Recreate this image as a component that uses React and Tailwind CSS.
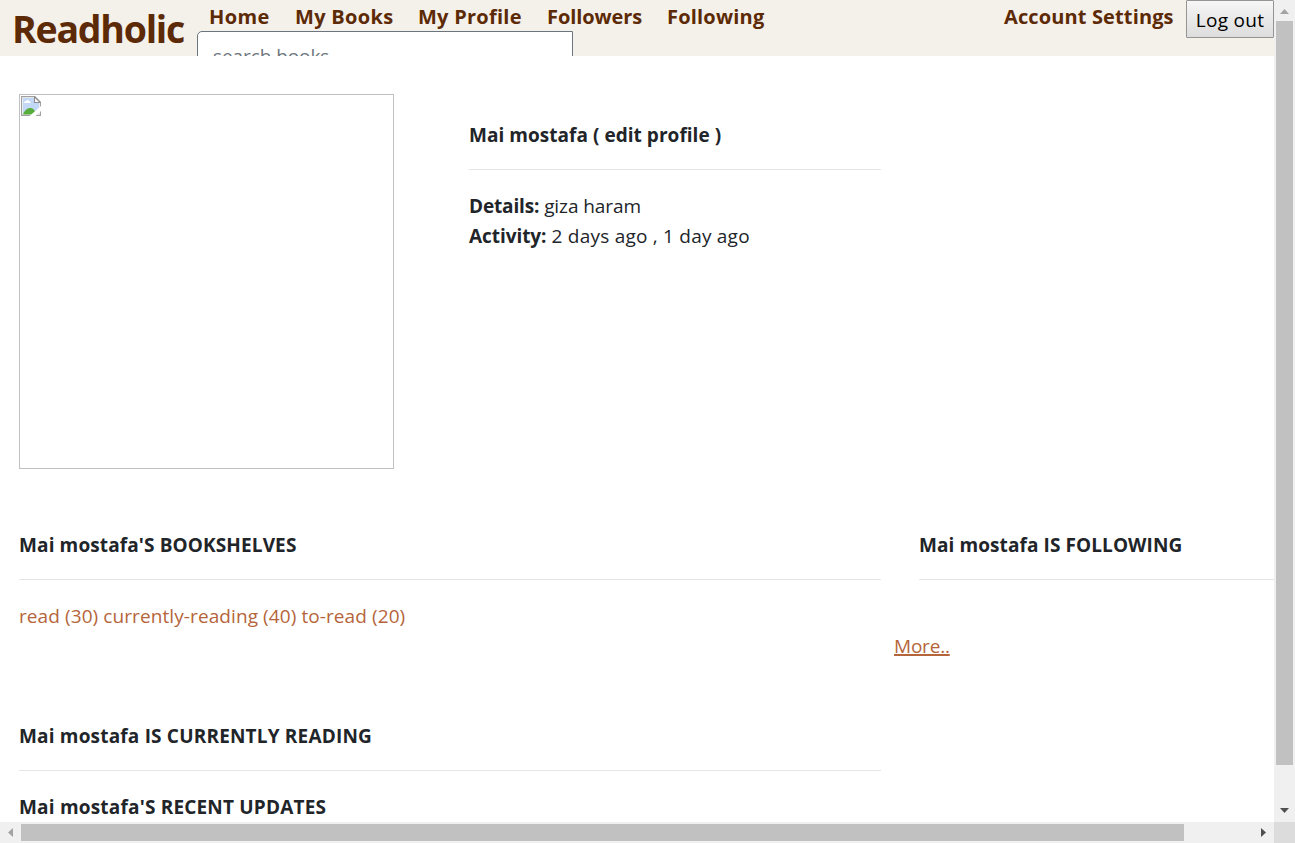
function Heading({ children, className = "" }) {
  return (
    <h2 className={`h-[30px] whitespace-nowrap text-[19px] leading-[30px] font-bold ${className}`}>
      {children}
    </h2>
  );
}

function Rule({ className = "" }) {
  return <hr className={`h-px border-0 bg-[#e5e5e5] ${className}`} />;
}

function BrokenImage() {
  return (
    <svg width="20" height="20" viewBox="0 0 20 20">
      <path d="M.6.6h13.2l5.6 5.6v13.2H.6Z" fill="#fff" stroke="#a0a0a0" strokeWidth="1.2" />
      <path d="M2 2h11v5h5v11H2Z" fill="#c3d7f6" />
      <path d="M3 7c0-1.5 1.7-1.5 2-2.2 1-1.5 3-1 3.300.5 1.300 0 1.500.8 1.500 1.700Z" fill="#fff" />
      <path d="M2 18.500c1-3.500 4-6.500 7-6.500s5 2 6 6.500Z" fill="#57ad3b" />
      <path d="M13.500.8v5.700h5.800Z" fill="#fff" stroke="#8d8d8d" strokeWidth="1.100" />
      <path d="M8.500 20 20 10v5l-5.500 5Z" fill="#fff" />
    </svg>
  );
}

function Arrow({ d, color }) {
  return (
    <svg width="21" height="21" viewBox="0 0 21 21" className="shrink-0">
      <path d={d} fill={color} />
    </svg>
  );
}

export default function App() {
  return (
    <div className="grid h-[843px] w-[1295px] grid-cols-[1274px_21px] grid-rows-[822px_21px] overflow-hidden bg-white font-['Open_Sans','Noto_Sans',sans-serif] text-[19px] text-[#212529]">
      <div className="overflow-hidden">
        <header className="flex h-14 overflow-hidden bg-[#f4f1ea] text-[#5c2a06]">
          <div className="w-[197px] shrink-0 pl-[12px] text-[37.5px] leading-[58px] font-bold tracking-[-1.25px]">
            Readholic
          </div>
          <div className="w-[807px] shrink-0">
            <nav className="flex h-[31px] text-[20px] leading-[33px] font-bold whitespace-nowrap">
              <a className="ml-3 w-[86px] tracking-[0.4px]">Home</a>
              <a className="w-[123px] tracking-[0.3px]">My Books</a>
              <a className="w-[129px] tracking-[0.25px]">My Profile</a>
              <a className="w-[120px] tracking-[-0.1px]">Followers</a>
              <a className="tracking-[0.2px]">Following</a>
            </nav>
            <div className="h-[48px] w-[376px] rounded-l-[5px] border border-[#6c757d] bg-white pl-[15px] leading-[48px] tracking-[-0.08px] text-[#6c757d]">
              search books
            </div>
          </div>
          <a className="w-[182px] shrink-0 text-[20px] leading-[33px] font-bold tracking-[0.13px] whitespace-nowrap">
            Account Settings
          </a>
          <button className="h-[38px] w-[88px] shrink-0 rounded-[1px] border border-[#949494] bg-linear-to-b from-[#f6f6f6] to-[#dddddd] pt-px text-[19px] leading-[36px] tracking-[0.3px] whitespace-nowrap text-black">
            Log out
          </button>
        </header>
        <main className="flex flex-col">
          <section className="flex h-[474px] pt-[38px] pl-[19px]">
            <div className="h-[375px] w-[375px] border border-[#c0c0c0] p-px">
              <BrokenImage />
            </div>
            <div className="ml-[75px] w-[412px] pt-[26px]">
              <Heading className="tracking-[0.04px]">Mai mostafa ( edit profile )</Heading>
              <Rule className="mt-[19px] mb-[21px]" />
              <p className="leading-[30px] tracking-[-0.08px]">
                <b className="tracking-[-0.15px]">Details:</b> giza haram
              </p>
              <p className="leading-[30px] tracking-[0.22px]">
                <b className="tracking-[-0.06px]">Activity:</b> 2 days ago , 1 day ago
              </p>
            </div>
          </section>
          <section className="flex pl-[19px]">
            <div className="w-[862px]">
              <Heading className="tracking-[0.12px]">Mai mostafa'S BOOKSHELVES</Heading>
              <Rule className="mt-[19px] mb-[21px]" />
              <p className="leading-[30px] tracking-[0.09px] text-[#b5653b]">
                <a>read (30)</a> <a>currently-reading (40)</a> <a>to-read (20)</a>
              </p>
              <Heading className="mt-[90px] tracking-[0.18px]">Mai mostafa IS CURRENTLY READING</Heading>
              <Rule className="mt-[19px] mb-[21px]" />
              <Heading className="tracking-[0.19px]">Mai mostafa'S RECENT UPDATES</Heading>
            </div>
            <div className="ml-[13px] w-[380px]">
              <Heading className="ml-[25px] tracking-[0.09px]">Mai mostafa IS FOLLOWING</Heading>
              <Rule className="mt-[19px] mb-[51px] ml-[25px]" />
              <a className="block leading-[30px] tracking-[-0.2px] text-[#b5653b] underline decoration-2">
                More..
              </a>
            </div>
          </section>
        </main>
      </div>
      <div className="flex flex-col items-center bg-[#f0f0f0]">
        <Arrow d="M6 14h9l-4.5-5Z" color="#a3a3a3" />
        <div className="h-[744px] w-[17px] bg-[#c1c1c1]" />
        <div className="grow" />
        <Arrow d="M6 7h9l-4.5 5Z" color="#505050" />
      </div>
      <div className="flex items-center bg-[#f0f0f0]">
        <Arrow d="M13 6v9l-5-4.5Z" color="#a3a3a3" />
        <div className="h-[17px] w-[1163px] bg-[#c1c1c1]" />
        <div className="grow" />
        <Arrow d="M8 6v9l5-4.5Z" color="#505050" />
      </div>
      <div className="bg-[#dcdcdc]" />
    </div>
  );
}
